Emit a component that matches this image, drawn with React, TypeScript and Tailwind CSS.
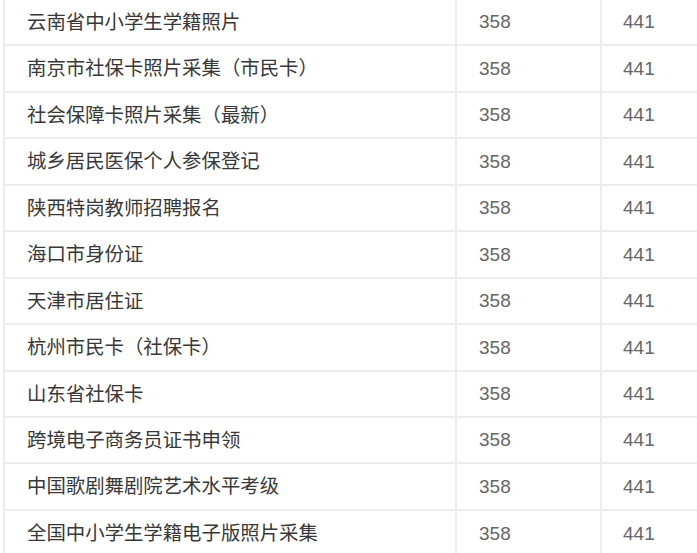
const rows: { name: string; h: string }[] = [
  { name: '云南省中小学生学籍照片', h: 'h-[46px]' },
  { name: '南京市社保卡照片采集（市民卡）', h: 'h-[47px]' },
  { name: '社会保障卡照片采集（最新）', h: 'h-[46px]' },
  { name: '城乡居民医保个人参保登记', h: 'h-[47px]' },
  { name: '陕西特岗教师招聘报名', h: 'h-[46px]' },
  { name: '海口市身份证', h: 'h-[47px]' },
  { name: '天津市居住证', h: 'h-[46px]' },
  { name: '杭州市民卡（社保卡）', h: 'h-[47px]' },
  { name: '山东省社保卡', h: 'h-[46px]' },
  { name: '跨境电子商务员证书申领', h: 'h-[46px]' },
  { name: '中国歌剧舞剧院艺术水平考级', h: 'h-[47px]' },
  { name: '全国中小学生学籍电子版照片采集', h: 'h-[47px]' },
];

export default function App() {
  return (
    <div className="w-[697px] h-[553px] overflow-hidden bg-white font-['Liberation_Sans','Noto_Sans_CJK_SC',sans-serif]">
      <div className="ml-[3px] border-l-2 border-[#ececec]">
        {rows.map((r) => (
          <div key={r.name} className={`flex ${r.h} border-b-2 border-[#ececec]`}>
            <div className="w-[450px] flex items-center pl-[22px] pt-[1px] text-[19.4px] text-[#383838]">
              {r.name}
            </div>
            <div className="w-[145px] flex items-center pl-[22px] pt-[1px] border-l-2 border-[#ececec] text-[19px] text-[#666]">
              358
            </div>
            <div className="flex-1 flex items-center pl-[21px] pt-[1px] border-l-2 border-[#ececec] text-[19px] text-[#666]">
              441
            </div>
          </div>
        ))}
      </div>
    </div>
  );
}
